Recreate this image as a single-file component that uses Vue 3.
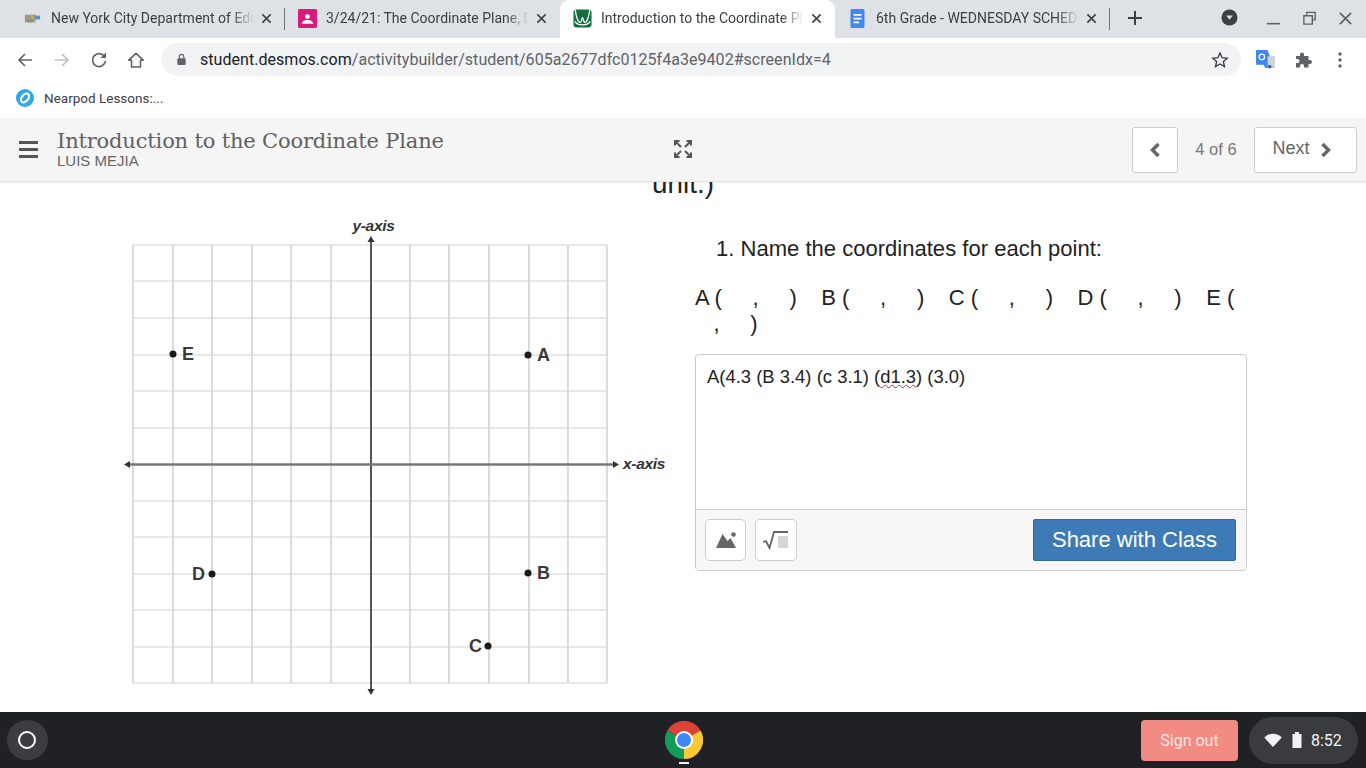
<template>
  <div class="screen">
    <!-- tab strip -->
    <div class="tabstrip">
      <div v-for="tab in tabs" :key="tab.title" class="tab" :class="{ active: tab.active }">
        <svg v-if="tab.icon === 'nyc'" class="favicon" viewBox="0 0 20 20">
          <rect x="2" y="6" width="11" height="8" fill="#9a9a8c" />
          <rect x="8" y="6" width="6" height="4" fill="#d9a441" />
          <rect x="12" y="7" width="6" height="4" fill="#5b8fc7" />
          <rect x="5" y="11" width="5" height="3" fill="#7d9a62" />
        </svg>
        <svg v-else-if="tab.icon === 'classroom'" class="favicon" viewBox="0 0 20 20">
          <rect x="0" y="0" width="20" height="20" rx="1.500" fill="#d81b7a" />
          <circle cx="10" cy="8" r="2.600" fill="#fff" />
          <path d="M4 15.500c.4-2.800 3-3.900 6-3.900s5.600 1.100 6 3.900z" fill="#fff" />
        </svg>
        <svg v-else-if="tab.icon === 'desmos'" class="favicon" viewBox="0 0 20 20">
          <rect x="0.500" y="0.500" width="19" height="19" rx="3.500" fill="#12703f" />
          <path d="M2.500 1c.5 6 2.500 13 5 13 2 0 1.500-5 2.500-5s.5 5 2.500 5c2.500 0 4.500-7 5-13M2 13c3 5 13 5 16 0" fill="none" stroke="#fff" stroke-width="1.300" />
        </svg>
        <svg v-else class="favicon docs" viewBox="0 0 14 19">
          <path d="M1.500 0h11A1.500 1.500 0 0 1 14 1.500v16a1.500 1.500 0 0 1-1.500 1.500h-11A1.500 1.500 0 0 1 0 17.500v-16A1.500 1.500 0 0 1 1.500 0z" fill="#4285f4" />
          <path d="M3 5h8v1.800H3zM3 8.700h8v1.800H3zM3 12.400h5.500v1.800H3z" fill="#fff" />
        </svg>
        <span class="tab-title">{{ tab.title }}</span>
        <svg class="tab-close" viewBox="0 0 12 12">
          <path d="M1.500 1.500l9 9M10.500 1.500l-9 9" stroke="#3c4043" stroke-width="1.700" />
        </svg>
        <i v-if="tab.divider" class="tab-divider"></i>
      </div>
      <svg class="new-tab" viewBox="0 0 16 16">
        <path d="M8 1v14M1 8h14" stroke="#3c4043" stroke-width="2" />
      </svg>
      <svg class="profile-dot" viewBox="0 0 18 18">
        <circle cx="9" cy="9" r="8.500" fill="#3c4043" />
        <path d="M5.500 7h7L9 11.500z" fill="#dee1e6" />
      </svg>
      <div class="window-controls">
        <svg viewBox="0 0 16 16"><path d="M1 13.500h14" stroke="#5f6368" stroke-width="1.700" /></svg>
        <svg viewBox="0 0 16 16">
          <path d="M5 4V1.500h9v8h-3M2 5h9v9H2z" fill="none" stroke="#5f6368" stroke-width="1.500" />
        </svg>
        <svg viewBox="0 0 16 16"><path d="M2 2l12 12M14 2L2 14" stroke="#5f6368" stroke-width="1.800" /></svg>
      </div>
    </div>

    <!-- address bar -->
    <div class="toolbar">
      <svg class="tool" viewBox="0 0 18 18">
        <path d="M16 9H3M9 3L3 9l6 6" fill="none" stroke="#5f6368" stroke-width="1.700" />
      </svg>
      <svg class="tool" viewBox="0 0 18 18">
        <path d="M2 9h13M9 3l6 6-6 6" fill="none" stroke="#bdc1c6" stroke-width="1.700" />
      </svg>
      <svg class="tool" viewBox="0 0 18 18">
        <path d="M14.500 5.500A6.500 6.500 0 1 0 15.500 10" fill="none" stroke="#5f6368" stroke-width="1.700" />
        <path d="M16 1.500v5.500h-5.500z" fill="#5f6368" />
      </svg>
      <svg class="tool" viewBox="0 0 18 18">
        <path d="M9 2.300L1.800 9.200h2.700V16h9V9.200h2.700z" fill="none" stroke="#5f6368" stroke-width="1.600" stroke-linejoin="round" />
      </svg>
      <div class="omnibox">
        <svg class="lock" viewBox="0 0 12 14">
          <path d="M3.500 6V4a2.500 2.500 0 0 1 5 0v2" fill="none" stroke="#5f6368" stroke-width="1.300" />
          <rect x="1.500" y="5.500" width="9" height="7.500" rx="1" fill="#5f6368" />
        </svg>
        <span class="url"><b>student.desmos.com</b>/activitybuilder/student/605a2677dfc0125f4a3e9402#screenIdx=4</span>
        <svg class="star" viewBox="0 0 18 18">
          <path d="M9 2l2.100 4.700 5.100.5-3.800 3.400 1.100 5L9 13l-4.500 2.600 1.100-5L1.800 7.200l5.100-.5z" fill="none" stroke="#3c4043" stroke-width="1.400" />
        </svg>
      </div>
      <svg class="ext translate" viewBox="0 0 20 20">
        <path d="M1 1h11l6 17h-8l-2-3H1z" fill="#4285f4" />
        <path d="M12 7h7v11l-7-1z" fill="#cfd3d6" />
        <path d="M12 15l2 4 2-3z" fill="#2a56a8" />
        <circle cx="6.500" cy="7.500" r="2.600" fill="none" stroke="#fff" stroke-width="1.200" />
      </svg>
      <svg class="ext puzzle" viewBox="0 0 18 18">
        <path d="M2 5h4V3.500a2 2 0 0 1 4 0V5h4.500v4H16a2 2 0 0 1 0 4h-1.500v3.500H10V15a2 2 0 0 0-4 0v1.500H2V12h1.500a2 2 0 0 0 0-4H2z" fill="#5f6368" />
      </svg>
      <svg class="ext dots" viewBox="0 0 4 18">
        <circle cx="2" cy="3" r="1.700" fill="#5f6368" />
        <circle cx="2" cy="9" r="1.700" fill="#5f6368" />
        <circle cx="2" cy="15" r="1.700" fill="#5f6368" />
      </svg>
    </div>

    <!-- bookmarks -->
    <div class="bookmarks">
      <svg class="nearpod" viewBox="0 0 18 18">
        <circle cx="9" cy="9" r="9" fill="#2ea8e6" />
        <ellipse cx="9" cy="9" rx="3.200" ry="5" transform="rotate(40 9 9)" fill="none" stroke="#fff" stroke-width="2.200" />
      </svg>
      <span>Nearpod Lessons:...</span>
    </div>

    <!-- activity header -->
    <header class="activity-bar">
      <div class="burger"><i></i><i></i><i></i></div>
      <div class="heading">
        <div class="title">Introduction to the Coordinate Plane</div>
        <div class="student">LUIS MEJIA</div>
      </div>
      <svg class="expand" viewBox="0 0 20 20">
        <path d="M8 8L2.500 2.500M2 6.500V2h4.500M12 8l5.500-5.500M13.500 2H18v4.500M8 12l-5.500 5.500M2 13.500V18h4.500M12 12l5.500 5.500M18 13.500V18h-4.500" fill="none" stroke="#555" stroke-width="2" />
      </svg>
      <div class="pager">
        <button class="page-btn prev">
          <svg viewBox="0 0 12 18"><path d="M9.500 3L3.500 9l6 6" fill="none" stroke="#666" stroke-width="3.500" /></svg>
        </button>
        <span class="count">4 of 6</span>
        <button class="page-btn next">
          Next
          <svg viewBox="0 0 12 18"><path d="M2.500 3l6 6-6 6" fill="none" stroke="#666" stroke-width="3.500" /></svg>
        </button>
      </div>
    </header>

    <!-- screen content -->
    <main class="content">
      <div class="graph-col">
        <svg class="graph" viewBox="0 182 652 530" width="652" height="530">
          <line v-for="x in gridX" :key="'x' + x" :x1="x" :x2="x" y1="245" y2="683" stroke="#c4c4c4" stroke-width="1.200" />
          <line v-for="y in gridY" :key="'y' + y" x1="133" x2="607" :y1="y" :y2="y" stroke="#d2d2d2" stroke-width="1.200" />
          <line x1="371" x2="371" y1="240" y2="690" stroke="#555" stroke-width="2" />
          <line x1="128" x2="614" y1="464.500" y2="464.500" stroke="#777" stroke-width="2.500" />
          <path d="M371 236l-3.500 6h7zM371 695l-3.500-6h7zM124 464.500l6-3.500v7zM619 464.500l-6-3.500v7z" fill="#333" />
          <text class="axis-label" x="373.500" y="231" text-anchor="middle">y-axis</text>
          <text class="axis-label" x="623" y="469">x-axis</text>
          <g v-for="p in points" :key="p.label">
            <circle :cx="p.x" :cy="p.y" r="3.500" fill="#1a1a1a" />
            <text class="point-label" :x="p.lx" :y="p.y + 6">{{ p.label }}</text>
          </g>
        </svg>
      </div>
      <div class="question-col">
        <div class="unit">unit.)</div>
        <div class="question">1. Name the coordinates for each point:</div>
        <div class="blanks">{{ blanks }}</div>
        <div class="response">
          <div class="answer">A(4.3 (B 3.4) (c 3.1) (<span class="typo">d1.3</span>) (3.0)</div>
          <div class="response-bar">
            <button class="tool-btn">
              <svg viewBox="0 0 22 18">
                <path d="M1 17L7.500 3l5 7 3-3L21 17z" fill="#666" />
                <circle cx="18.500" cy="3.500" r="2.300" fill="#666" />
              </svg>
            </button>
            <button class="tool-btn root">
              <svg viewBox="0 0 28 20">
                <path d="M1 12l3-1 3.500 7L12 2h14" fill="none" stroke="#666" stroke-width="1.800" />
                <rect x="16" y="6" width="10" height="12" fill="#d6d6d6" />
              </svg>
            </button>
            <button class="share">Share with Class</button>
          </div>
        </div>
      </div>
    </main>

    <!-- chromeos shelf -->
    <footer class="shelf">
      <div class="launcher"><i></i></div>
      <div class="shelf-apps">
        <svg class="chrome" viewBox="0 0 38 38">
          <path d="M19 19L2.500 9.500A19 19 0 0 1 35.500 9.500z" fill="#db4437" />
          <path d="M19 19L35.500 9.500A19 19 0 0 1 19 38z" fill="#fcc934" />
          <path d="M19 19L19 38A19 19 0 0 1 2.500 9.500z" fill="#0f9d58" />
          <circle cx="19" cy="19" r="9" fill="#fff" />
          <circle cx="19" cy="19" r="7" fill="#4285f4" />
        </svg>
        <i class="running"></i>
      </div>
      <button class="signout">Sign out</button>
      <div class="status">
        <svg class="wifi" viewBox="0 0 20 16"><path d="M0 5a14 14 0 0 1 20 0L10 16z" fill="#f1f3f4" /></svg>
        <svg class="battery" viewBox="0 0 10 16">
          <path d="M3 0h4v2h2.500v14H.5V2H3z" fill="#f1f3f4" />
        </svg>
        <span>8:52</span>
      </div>
    </footer>
  </div>
</template>

<script setup>
const tabs = [
  { title: 'New York City Department of Edu', icon: 'nyc', divider: true },
  { title: '3/24/21: The Coordinate Plane, D', icon: 'classroom' },
  { title: 'Introduction to the Coordinate Pl', icon: 'desmos', active: true },
  { title: '6th Grade - WEDNESDAY SCHED', icon: 'docs', divider: true }
]

const gridX = [133, 173, 212, 252, 291, 331, 410, 449, 489, 529, 568, 607]
const gridY = [245, 281, 318, 355, 391, 428, 501, 537, 574, 610, 647, 683]

const points = [
  { label: 'A', x: 528, y: 355, lx: 537 },
  { label: 'E', x: 173, y: 354, lx: 182 },
  { label: 'D', x: 212, y: 574, lx: 192 },
  { label: 'B', x: 528, y: 573, lx: 537 },
  { label: 'C', x: 488, y: 646, lx: 469 }
]

// built in script: the template compiler would collapse these runs of spaces.
// the nbsp run keeps its indent on the wrapped line after "E ("
const blanks = 'A (     ,     )    B (     ,     )    C (     ,     )    D (     ,     )    E ( \u00a0\u00a0\u00a0,     )'
</script>

<style>
body {
  overflow: hidden;
}
</style>

<style scoped>
.screen {
  width: 1366px;
  height: 768px;
  display: flex;
  flex-direction: column;
  overflow: hidden;
  background: #fff;
  font-family: "Liberation Sans", Arial, sans-serif;
}

button {
  font-family: inherit;
  cursor: pointer;
}

/* tabs */
.tabstrip {
  height: 38px;
  flex: none;
  display: flex;
  align-items: stretch;
  padding-left: 10px;
  background: #dee1e6;
}

.tab {
  position: relative;
  width: 275px;
  flex: none;
  display: flex;
  align-items: center;
  padding: 0 0 2px 13px;
  box-sizing: border-box;
  color: #3c4043;
  font: 14px Roboto, sans-serif;
}

.tab.active {
  background: #fff;
  border-radius: 9px 9px 0 0;
}

.favicon {
  width: 19px;
  height: 19px;
  flex: none;
  margin-right: 9px;
}

.tab-title {
  width: 210px;
  flex: none;
  white-space: nowrap;
  overflow: hidden;
  -webkit-mask-image: linear-gradient(90deg, #000 180px, transparent 203px);
  mask-image: linear-gradient(90deg, #000 180px, transparent 203px);
}

.tab-close {
  width: 11px;
  height: 11px;
  flex: none;
}

.tab-divider {
  position: absolute;
  right: 0;
  top: 8px;
  width: 1px;
  height: 22px;
  background: #6f7378;
}

.new-tab {
  width: 16px;
  height: 16px;
  margin: 10px 0 0 17px;
}

.profile-dot {
  width: 17px;
  height: 17px;
  margin: 9px 0 0 78px;
}

.window-controls {
  display: flex;
  gap: 21px;
  margin-left: 28px;
  padding-top: 11px;
}

.window-controls svg {
  width: 15px;
  height: 15px;
}

/* toolbar */
.toolbar {
  height: 41px;
  flex: none;
  display: flex;
  align-items: center;
  padding: 2px 0 0 16px;
  box-sizing: border-box;
}

.tool {
  width: 18px;
  height: 18px;
  flex: none;
  margin-right: 19px;
}

.omnibox {
  width: 1080px;
  height: 33px;
  margin-left: -3px;
  flex: none;
  display: flex;
  align-items: center;
  padding-left: 15px;
  box-sizing: border-box;
  border-radius: 17px;
  background: #f1f3f4;
}

.lock {
  width: 11px;
  height: 13px;
  margin-right: 13px;
}

.url {
  flex: 1;
  font: 16px Roboto, sans-serif;
  letter-spacing: 0.04px;
  color: #5f6368;
  white-space: nowrap;
}

.url b {
  font-weight: 400;
  color: #202124;
}

.star {
  width: 18px;
  height: 18px;
  margin-right: 12px;
}

.ext {
  flex: none;
  height: 18px;
  width: 18px;
}

.translate {
  width: 21px;
  height: 21px;
  margin-left: 14px;
}

.puzzle {
  margin-left: 18px;
}

.dots {
  width: 4px;
  margin-left: 26px;
}

/* bookmarks */
.bookmarks {
  height: 39px;
  flex: none;
  display: flex;
  align-items: center;
  gap: 10px;
  padding: 0 0 2px 16px;
  box-sizing: border-box;
  font: 13.500px Roboto, sans-serif;
  color: #3c4043;
}

.nearpod {
  width: 18px;
  height: 18px;
}

/* activity bar */
.activity-bar {
  height: 64px;
  flex: none;
  display: flex;
  align-items: center;
  padding-left: 19px;
  box-sizing: border-box;
  background: #f5f5f5;
  border-bottom: 1px solid #e3e3e3;
  box-shadow: 0 1px 2px rgba(0, 0, 0, 0.08);
  position: relative;
  z-index: 1;
}

.burger {
  width: 19px;
  display: flex;
  flex-direction: column;
  gap: 4px;
  margin: 0 19px 0 0;
}

.burger i {
  display: block;
  height: 3px;
  background: #555;
}

.heading {
  width: 617px;
  flex: none;
  margin-top: -2px;
}

.title {
  font: 21px/25px "DejaVu Serif", serif;
  letter-spacing: -0.17px;
  color: #616161;
  white-space: nowrap;
}

.student {
  font-size: 15px;
  line-height: 14px;
  color: #666;
}

.expand {
  width: 20px;
  height: 20px;
  flex: none;
  margin: -1px 0 0 -1px;
}

.pager {
  margin-left: auto;
  display: flex;
  align-items: center;
  padding-right: 9px;
}

.page-btn {
  height: 46px;
  background: #fff;
  border: 1px solid #ccc;
  border-radius: 3px;
  color: #666;
  font-size: 18px;
  display: flex;
  align-items: center;
  justify-content: center;
  padding: 0;
}

.page-btn svg {
  width: 12px;
  height: 18px;
}

.prev {
  width: 46px;
}

.next {
  width: 103px;
  gap: 10px;
  padding: 0 7px 2px 0;
}

.next svg {
  margin-top: 2px;
}

.count {
  width: 76px;
  text-align: center;
  font-size: 16.500px;
  color: #777;
}

/* content */
.content {
  flex: 1;
  min-height: 0;
  display: flex;
  overflow: hidden;
}

.graph-col {
  width: 652px;
  flex: none;
}

.graph {
  display: block;
  overflow: visible;
}

.axis-label {
  font: italic 700 15.500px "Liberation Sans", sans-serif;
  fill: #333;
  letter-spacing: -0.3px;
}

.point-label {
  font: 700 18px "Liberation Sans", sans-serif;
  fill: #3a3a3a;
}

.question-col {
  flex: 1;
  color: #222;
  font-size: 22px;
  line-height: 26px;
  letter-spacing: 0.02px;
}

.unit {
  font-size: 27.800px;
  line-height: 28px;
  margin-top: -12px;
}

.question {
  margin: 38px 0 0 64px;
}

.blanks {
  width: 552px;
  margin: 23px 0 0 43px;
  white-space: pre-wrap;
}

.response {
  width: 552px;
  height: 217px;
  margin: 17px 0 0 43px;
  box-sizing: border-box;
  display: flex;
  flex-direction: column;
  border: 1px solid #ccc;
  border-radius: 4px;
}

.answer {
  flex: 1;
  padding: 11px;
  font-size: 18.400px;
  line-height: 22px;
}

.typo {
  text-decoration: underline wavy #c53030 1px;
}

.response-bar {
  height: 61px;
  flex: none;
  display: flex;
  align-items: center;
  gap: 9px;
  padding: 0 10px 0 9px;
  box-sizing: border-box;
  background: #f7f7f7;
  border-top: 1px solid #ccc;
  border-radius: 0 0 4px 4px;
}

.tool-btn {
  width: 41px;
  height: 42px;
  background: #fff;
  border: 1px solid #ccc;
  border-radius: 5px;
  display: flex;
  align-items: center;
  justify-content: center;
  padding: 0;
}

.tool-btn svg {
  width: 22px;
  height: 18px;
}

.tool-btn.root {
  width: 42px;
}

.tool-btn.root svg {
  width: 28px;
  height: 20px;
}

.share {
  width: 203px;
  height: 42px;
  margin-left: auto;
  background: #3e7ab5;
  border: 1px solid #36699c;
  border-radius: 2px;
  color: #fff;
  font-size: 22px;
}

/* shelf */
.shelf {
  height: 56px;
  flex: none;
  display: flex;
  align-items: center;
  padding: 0 8px 0 7px;
  box-sizing: border-box;
  background: #202124;
}

.launcher {
  width: 41px;
  height: 40px;
  border-radius: 50%;
  background: #3c3d40;
  display: flex;
  align-items: center;
  justify-content: center;
  padding-right: 1px;
  box-sizing: border-box;
}

.launcher i {
  width: 14px;
  height: 14px;
  border: 2px solid #fff;
  border-radius: 50%;
}

.shelf-apps {
  width: 38px;
  margin-left: 617px;
  position: relative;
  display: flex;
  justify-content: center;
}

.chrome {
  width: 38px;
  height: 38px;
}

.running {
  position: absolute;
  bottom: -5px;
  left: 14px;
  width: 10px;
  height: 2px;
  background: #f1f3f4;
}

.signout {
  width: 97px;
  height: 41px;
  margin-left: 438px;
  background: #f28b82;
  border: none;
  border-radius: 4px;
  color: #fce8e6;
  font: 16px Roboto, sans-serif;
}

.status {
  width: 109px;
  height: 47px;
  margin-left: 11px;
  display: flex;
  align-items: center;
  padding-left: 15px;
  box-sizing: border-box;
  background: #3a3b3e;
  border-radius: 24px;
  color: #f1f3f4;
  font: 16px Roboto, sans-serif;
}

.wifi {
  width: 18px;
  height: 14px;
}

.battery {
  width: 10px;
  height: 16px;
  margin: 0 9px 0 10px;
}
</style>
